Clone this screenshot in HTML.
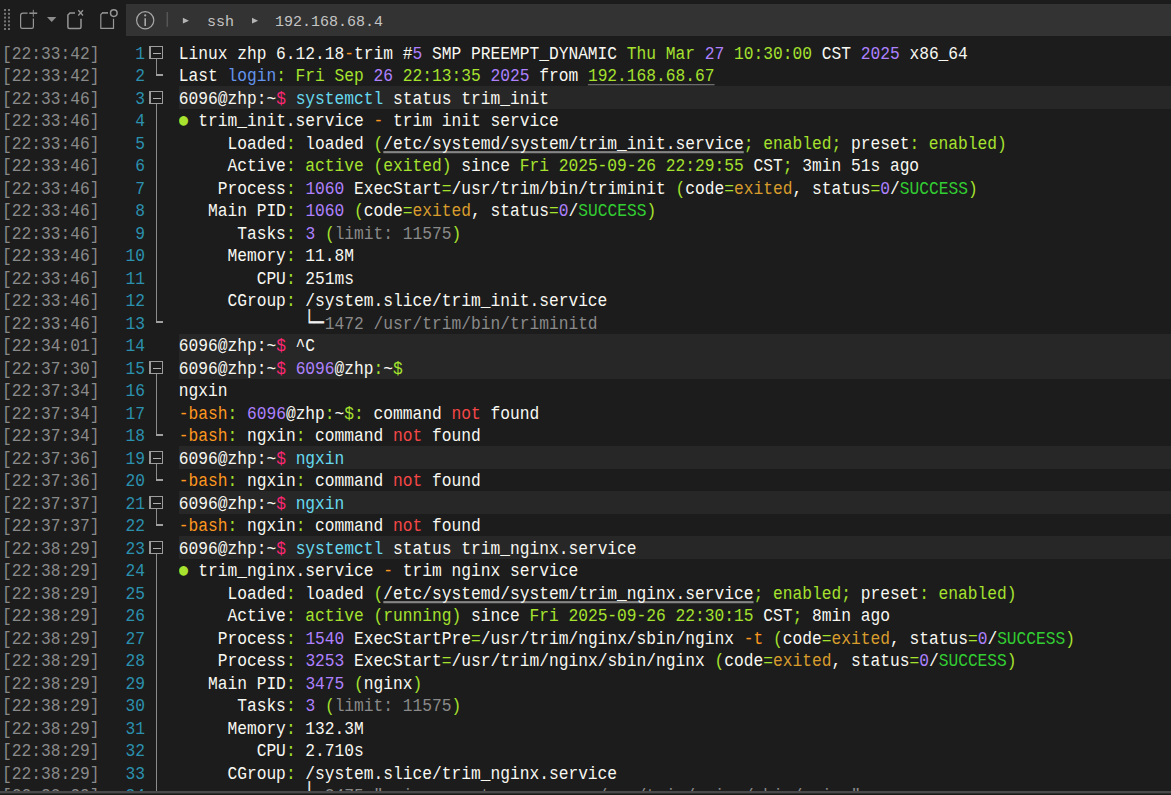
<!DOCTYPE html>
<html lang="en"><head><meta charset="utf-8"><title>ssh 192.168.68.4</title>
<style>
*{margin:0;padding:0;box-sizing:border-box}
html,body{width:1171px;height:795px;overflow:hidden;background:#1c1c1c}
body{position:relative;font-family:"Liberation Mono","DejaVu Sans Mono",monospace;font-size:16.25px;line-height:22.5px;color:#f8f8f2;-webkit-font-smoothing:antialiased}
#bar{position:absolute;left:0;top:0;width:1171px;height:41px;background:#1c1c1c}
#crumb{position:absolute;left:126px;top:4px;width:1045px;height:32px;background:#333333;color:#c4c4c4;font-size:15px;line-height:32px;white-space:pre}
#crumb span{position:absolute;top:2.5px}
#term{position:absolute;left:0;top:0;width:1171px;height:791px;overflow:hidden}
.r{position:absolute;left:0;width:1171px;height:22.5px;white-space:pre}
.ts{position:absolute;left:2px;top:2.5px;color:#8a8a8a}
.ln{position:absolute;left:46px;width:99px;top:2.5px;text-align:right;color:#2b91af}
.tx{position:absolute;left:179px;top:0;width:992px;height:22.5px}
.tx>b{position:absolute;left:-.3px;top:2.5px;font-weight:normal;letter-spacing:-.01px}
.ts,.ln,.tx>b{transform:scaleY(1.075);transform-origin:0 15.6px}
.pb{background:#272727}
.g{color:#a6e22e}.p{color:#ae81ff}.o{color:#fd971f}.b{color:#6495ed}.k{color:#f92672}.c{color:#66d9ef}
.y{color:#d89c2c}.s{color:#32cd32}.r0{color:#f44747}.d{color:#8a8a8a}.t{display:inline-block;position:relative;left:-1px;top:-.5px;color:#f0f0f0;font-family:"DejaVu Sans Mono",monospace;font-size:16.2px;line-height:16px;transform:scaleY(1.26);transform-origin:0 8px;-webkit-text-stroke:.15px #f0f0f0}
.bl{display:inline-block;width:9.75px;line-height:16px;position:relative;top:-1px;left:.4px;color:#a6e22e;font-family:"DejaVu Sans Mono",monospace;font-size:15px}
.u{text-decoration:underline;text-decoration-color:#858585;text-underline-offset:2px;text-decoration-thickness:2px;text-decoration-skip-ink:none}
.gu{color:#a6e22e;text-decoration:underline;text-decoration-color:#7c7c7c;text-underline-offset:3px;text-decoration-thickness:1px;text-decoration-skip-ink:none}
.fb{position:absolute;left:149px;top:5px;width:14px;height:13px;border:1px solid #9c9c9c;border-left-width:2px}
.fb:after{content:"";position:absolute;left:2px;top:6px;width:8px;height:1px;background:#b0b0b0}
.fv{position:absolute;left:156px;width:1px;background:#8c8c8c}
.fh{position:absolute;left:156px;width:7px;height:2px;background:#a0a0a0}
#foot{position:absolute;left:0;top:791px;width:1171px;height:4px;background:#1c1c1c;border-top:2px solid #4a4a4a}
#foot:after{content:"";position:absolute;left:0;top:0;width:1171px;height:1px;background:#2c2c2c}
</style></head>
<body>
<div id="term">
<div class="r" style="top:41px"><span class="ts">[22:33:42]</span><span class="ln">1</span><i class="fb"></i><i class="fv" style="top:18px;height:5px"></i><div class="tx"><b>Linux zhp 6.12.18<span class="o">-</span>trim #<span class="p">5</span> SMP PREEMPT_DYNAMIC <span class="g">Thu Mar</span> <span class="p">27</span> <span class="g">10:30:00</span> CST <span class="p">2025</span> x86_64</b></div></div>
<div class="r" style="top:63.5px"><span class="ts">[22:33:42]</span><span class="ln">2</span><i class="fv" style="top:0;height:11px"></i><i class="fh" style="top:10px"></i><div class="tx"><b>Last <span class="b">login</span><span class="g">: Fri Sep </span><span class="p">26</span><span class="g"> 22:13:35 </span><span class="p">2025</span> from <span class="gu">192.168.68.67</span></b></div></div>
<div class="r" style="top:86px"><span class="ts">[22:33:46]</span><span class="ln">3</span><i class="fb"></i><i class="fv" style="top:18px;height:5px"></i><div class="tx pb"><b>6096@zhp:~<span class="k">$</span> <span class="c">systemctl</span> status trim_init</b></div></div>
<div class="r" style="top:108.5px"><span class="ts">[22:33:46]</span><span class="ln">4</span><i class="fv" style="top:0;height:23px"></i><div class="tx"><b><span class="bl">●</span> trim_init.service <span class="o">-</span> trim init service</b></div></div>
<div class="r" style="top:131px"><span class="ts">[22:33:46]</span><span class="ln">5</span><i class="fv" style="top:0;height:23px"></i><div class="tx"><b>     Loaded<span class="g">:</span> loaded <span class="g">(</span><span class="u">/etc/systemd/system/trim_init.service</span><span class="g">; enabled;</span> preset<span class="g">: enabled)</span></b></div></div>
<div class="r" style="top:153.5px"><span class="ts">[22:33:46]</span><span class="ln">6</span><i class="fv" style="top:0;height:23px"></i><div class="tx"><b>     Active<span class="g">: active (exited)</span> since <span class="g">Fri 2025-09-26 22:29:55</span> CST<span class="g">;</span> 3min 51s ago</b></div></div>
<div class="r" style="top:176px"><span class="ts">[22:33:46]</span><span class="ln">7</span><i class="fv" style="top:0;height:23px"></i><div class="tx"><b>    Process<span class="g">:</span> <span class="p">1060</span> ExecStart<span class="g">=</span>/usr/trim/bin/triminit <span class="g">(</span>code<span class="g">=</span><span class="y">exited</span>, status<span class="g">=</span><span class="p">0</span>/<span class="s">SUCCESS</span><span class="g">)</span></b></div></div>
<div class="r" style="top:198.5px"><span class="ts">[22:33:46]</span><span class="ln">8</span><i class="fv" style="top:0;height:23px"></i><div class="tx"><b>   Main PID<span class="g">:</span> <span class="p">1060</span> <span class="g">(</span>code<span class="g">=</span><span class="y">exited</span>, status<span class="g">=</span><span class="p">0</span>/<span class="s">SUCCESS</span><span class="g">)</span></b></div></div>
<div class="r" style="top:221px"><span class="ts">[22:33:46]</span><span class="ln">9</span><i class="fv" style="top:0;height:23px"></i><div class="tx"><b>      Tasks<span class="g">:</span> <span class="p">3</span> <span class="g">(</span><span class="d">limit: 11575</span><span class="g">)</span></b></div></div>
<div class="r" style="top:243.5px"><span class="ts">[22:33:46]</span><span class="ln">10</span><i class="fv" style="top:0;height:23px"></i><div class="tx"><b>     Memory<span class="g">:</span> 11.8M</b></div></div>
<div class="r" style="top:266px"><span class="ts">[22:33:46]</span><span class="ln">11</span><i class="fv" style="top:0;height:23px"></i><div class="tx"><b>        CPU<span class="g">:</span> 251ms</b></div></div>
<div class="r" style="top:288.5px"><span class="ts">[22:33:46]</span><span class="ln">12</span><i class="fv" style="top:0;height:23px"></i><div class="tx"><b>     CGroup<span class="g">:</span> /system.slice/trim_init.service</b></div></div>
<div class="r" style="top:311px"><span class="ts">[22:33:46]</span><span class="ln">13</span><i class="fv" style="top:0;height:11px"></i><i class="fh" style="top:10px"></i><div class="tx"><b>             <span class="t">└─</span><span class="d">1472 /usr/trim/bin/triminitd</span></b></div></div>
<div class="r" style="top:333.5px"><span class="ts">[22:34:01]</span><span class="ln">14</span><div class="tx pb"><b>6096@zhp:~<span class="k">$</span> ^C</b></div></div>
<div class="r" style="top:356px"><span class="ts">[22:37:30]</span><span class="ln">15</span><i class="fb"></i><i class="fv" style="top:18px;height:5px"></i><div class="tx pb"><b>6096@zhp:~<span class="k">$</span> <span class="p">6096</span>@zhp<span class="g">:</span>~<span class="g">$</span></b></div></div>
<div class="r" style="top:378.5px"><span class="ts">[22:37:34]</span><span class="ln">16</span><i class="fv" style="top:0;height:23px"></i><div class="tx"><b>ngxin</b></div></div>
<div class="r" style="top:401px"><span class="ts">[22:37:34]</span><span class="ln">17</span><i class="fv" style="top:0;height:23px"></i><div class="tx"><b><span class="o">-bash</span><span class="g">:</span> <span class="p">6096</span>@zhp<span class="g">:</span>~<span class="g">$:</span> command <span class="r0">not</span> found</b></div></div>
<div class="r" style="top:423.5px"><span class="ts">[22:37:34]</span><span class="ln">18</span><i class="fv" style="top:0;height:11px"></i><i class="fh" style="top:10px"></i><div class="tx"><b><span class="o">-bash</span><span class="g">:</span> ngxin<span class="g">:</span> command <span class="r0">not</span> found</b></div></div>
<div class="r" style="top:446px"><span class="ts">[22:37:36]</span><span class="ln">19</span><i class="fb"></i><i class="fv" style="top:18px;height:5px"></i><div class="tx pb"><b>6096@zhp:~<span class="k">$</span> <span class="c">ngxin</span></b></div></div>
<div class="r" style="top:468.5px"><span class="ts">[22:37:36]</span><span class="ln">20</span><i class="fv" style="top:0;height:11px"></i><i class="fh" style="top:10px"></i><div class="tx"><b><span class="o">-bash</span><span class="g">:</span> ngxin<span class="g">:</span> command <span class="r0">not</span> found</b></div></div>
<div class="r" style="top:491px"><span class="ts">[22:37:37]</span><span class="ln">21</span><i class="fb"></i><i class="fv" style="top:18px;height:5px"></i><div class="tx pb"><b>6096@zhp:~<span class="k">$</span> <span class="c">ngxin</span></b></div></div>
<div class="r" style="top:513.5px"><span class="ts">[22:37:37]</span><span class="ln">22</span><i class="fv" style="top:0;height:11px"></i><i class="fh" style="top:10px"></i><div class="tx"><b><span class="o">-bash</span><span class="g">:</span> ngxin<span class="g">:</span> command <span class="r0">not</span> found</b></div></div>
<div class="r" style="top:536px"><span class="ts">[22:38:29]</span><span class="ln">23</span><i class="fb"></i><i class="fv" style="top:18px;height:5px"></i><div class="tx pb"><b>6096@zhp:~<span class="k">$</span> <span class="c">systemctl</span> status trim_nginx.service</b></div></div>
<div class="r" style="top:558.5px"><span class="ts">[22:38:29]</span><span class="ln">24</span><i class="fv" style="top:0;height:23px"></i><div class="tx"><b><span class="bl">●</span> trim_nginx.service <span class="o">-</span> trim nginx service</b></div></div>
<div class="r" style="top:581px"><span class="ts">[22:38:29]</span><span class="ln">25</span><i class="fv" style="top:0;height:23px"></i><div class="tx"><b>     Loaded<span class="g">:</span> loaded <span class="g">(</span><span class="u">/etc/systemd/system/trim_nginx.service</span><span class="g">; enabled;</span> preset<span class="g">: enabled)</span></b></div></div>
<div class="r" style="top:603.5px"><span class="ts">[22:38:29]</span><span class="ln">26</span><i class="fv" style="top:0;height:23px"></i><div class="tx"><b>     Active<span class="g">: active (running)</span> since <span class="g">Fri 2025-09-26 22:30:15</span> CST<span class="g">;</span> 8min ago</b></div></div>
<div class="r" style="top:626px"><span class="ts">[22:38:29]</span><span class="ln">27</span><i class="fv" style="top:0;height:23px"></i><div class="tx"><b>    Process<span class="g">:</span> <span class="p">1540</span> ExecStartPre<span class="g">=</span>/usr/trim/nginx/sbin/nginx <span class="o">-t</span> <span class="g">(</span>code<span class="g">=</span><span class="y">exited</span>, status<span class="g">=</span><span class="p">0</span>/<span class="s">SUCCESS</span><span class="g">)</span></b></div></div>
<div class="r" style="top:648.5px"><span class="ts">[22:38:29]</span><span class="ln">28</span><i class="fv" style="top:0;height:23px"></i><div class="tx"><b>    Process<span class="g">:</span> <span class="p">3253</span> ExecStart<span class="g">=</span>/usr/trim/nginx/sbin/nginx <span class="g">(</span>code<span class="g">=</span><span class="y">exited</span>, status<span class="g">=</span><span class="p">0</span>/<span class="s">SUCCESS</span><span class="g">)</span></b></div></div>
<div class="r" style="top:671px"><span class="ts">[22:38:29]</span><span class="ln">29</span><i class="fv" style="top:0;height:23px"></i><div class="tx"><b>   Main PID<span class="g">:</span> <span class="p">3475</span> <span class="g">(</span>nginx<span class="g">)</span></b></div></div>
<div class="r" style="top:693.5px"><span class="ts">[22:38:29]</span><span class="ln">30</span><i class="fv" style="top:0;height:23px"></i><div class="tx"><b>      Tasks<span class="g">:</span> <span class="p">3</span> <span class="g">(</span><span class="d">limit: 11575</span><span class="g">)</span></b></div></div>
<div class="r" style="top:716px"><span class="ts">[22:38:29]</span><span class="ln">31</span><i class="fv" style="top:0;height:23px"></i><div class="tx"><b>     Memory<span class="g">:</span> 132.3M</b></div></div>
<div class="r" style="top:738.5px"><span class="ts">[22:38:29]</span><span class="ln">32</span><i class="fv" style="top:0;height:23px"></i><div class="tx"><b>        CPU<span class="g">:</span> 2.710s</b></div></div>
<div class="r" style="top:761px"><span class="ts">[22:38:29]</span><span class="ln">33</span><i class="fv" style="top:0;height:23px"></i><div class="tx"><b>     CGroup<span class="g">:</span> /system.slice/trim_nginx.service</b></div></div>
<div class="r" style="top:783.5px"><span class="ts">[22:38:29]</span><span class="ln">34</span><i class="fv" style="top:0;height:23px"></i><div class="tx"><b>             <span class="t">├─</span><span class="d">3475 "nginx: master process /usr/trim/nginx/sbin/nginx"</span></b></div></div>
</div>
<div id="bar">
<svg width="126" height="41" viewBox="0 0 126 41" style="position:absolute;left:0;top:0" fill="none" stroke="#969696" stroke-width="1.2">
<g stroke="none" fill="#757575"><rect x="4" y="9" width="2" height="2"/><rect x="8" y="9" width="2" height="2"/><rect x="4" y="12.8" width="2" height="2"/><rect x="8" y="12.8" width="2" height="2"/><rect x="4" y="16.6" width="2" height="2"/><rect x="8" y="16.6" width="2" height="2"/><rect x="4" y="20.4" width="2" height="2"/><rect x="8" y="20.4" width="2" height="2"/><rect x="4" y="24.2" width="2" height="2"/><rect x="8" y="24.2" width="2" height="2"/><rect x="4" y="28" width="2" height="2"/><rect x="8" y="28" width="2" height="2"/></g>
<path d="M27.6 13.2H23Q20.6 13.2 20.6 15.6V26.8Q20.6 28.4 22.2 28.4H31.8Q33.4 28.4 33.4 26.8V18.4"/>
<path d="M29.3 13.2H37.2" stroke-width="1.5"/><path d="M33.3 9.8V16.8" stroke-width="1" stroke="#8a8a8a"/>
<path d="M47 17.1H56.4L51.7 22.1Z" fill="#8c8c8c" stroke="none"/>
<path d="M75 12.9H70L67.9 15V27Q67.9 28.5 69.4 28.5H79.5Q81 28.5 81 27V18.8" stroke-width="1.5"/>
<path d="M78.3 10.3L83 15.5M83 10.3L78.3 15.5" stroke-width="1.3"/>
<path d="M102.5 12.9L100.8 14.6V28.4H113.5V18.8"/>
<path d="M102 12.9H108" stroke-width="1.6"/>
<circle cx="113.8" cy="13.1" r="3.3" stroke-width="1.5"/>
</svg>
<div id="crumb">
<svg width="70" height="32" viewBox="0 0 70 32" style="position:absolute;left:0;top:0" fill="none" stroke="#a8a8a8" stroke-width="1.2">
<circle cx="19.2" cy="16.3" r="8.6"/>
<path d="M19.2 14.2V22" stroke-width="1.6"/><circle cx="19.2" cy="11.4" r="1.1" fill="#a8a8a8" stroke="none"/>
<path d="M41.3 8V22.8" stroke="#565656" stroke-width="1.5"/>
<path d="M56.9 13.8L63 16.7L56.9 19.6Z" fill="#b4b4b4" stroke="none"/>
</svg>
<span style="left:81px">ssh</span>
<svg width="10" height="32" viewBox="0 0 10 32" style="position:absolute;left:125px;top:0"><path d="M1 13.8L7.1 16.7L1 19.6Z" fill="#b4b4b4"/></svg>
<span style="left:149px">192.168.68.4</span>
</div>
</div>
<div id="foot"></div>
</body></html>
